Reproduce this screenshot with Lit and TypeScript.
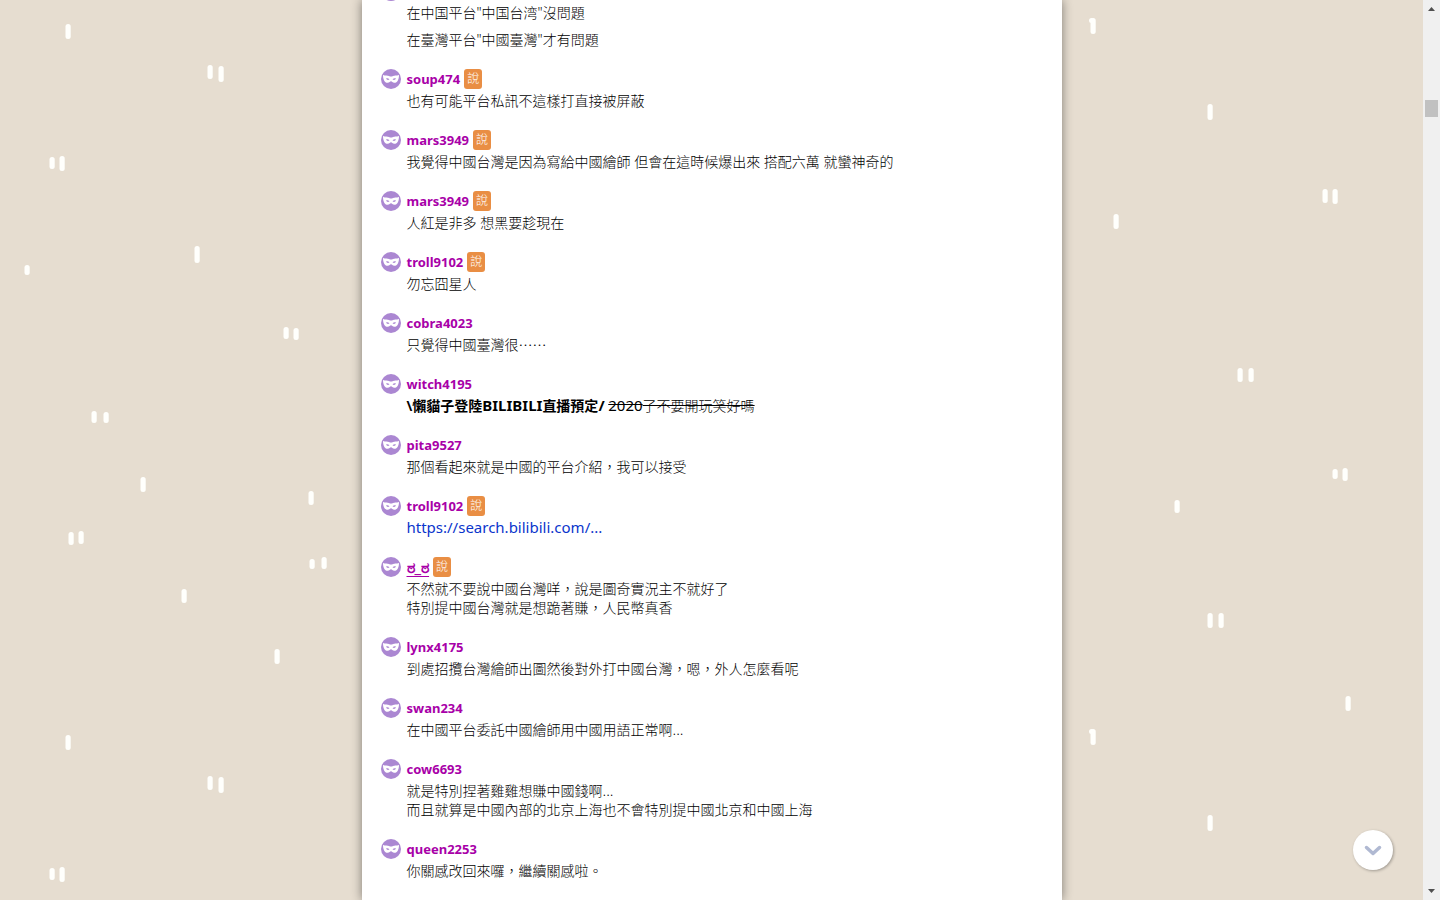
import { LitElement, html, css, svg, nothing, TemplateResult } from "lit";
import { customElement, property } from "lit/decorators.js";

interface Post {
  user?: string;
  registered?: boolean;
  says?: boolean;
  paragraphs: (string | TemplateResult)[];
}

const posts: Post[] = [
  {
    paragraphs: ['在中国平台"中国台湾"沒問題', '在臺灣平台"中國臺灣"才有問題'],
  },
  { user: "soup474", says: true, paragraphs: ["也有可能平台私訊不這樣打直接被屏蔽"] },
  {
    user: "mars3949",
    says: true,
    paragraphs: ["我覺得中國台灣是因為寫給中國繪師 但會在這時候爆出來 搭配六萬 就蠻神奇的"],
  },
  { user: "mars3949", says: true, paragraphs: ["人紅是非多 想黑要趁現在"] },
  { user: "troll9102", says: true, paragraphs: ["勿忘囧星人"] },
  { user: "cobra4023", paragraphs: [html`只覺得中國臺灣很<span class="wide">……</span>`] },
  {
    user: "witch4195",
    paragraphs: [
      html`<b>\\懶貓子登陸<span class="latin">BILIBILI</span>直播預定<span class="latin">/</span></b>
        <s><span class="latin">2020</span>了不要開玩笑好嗎</s>`,
    ],
  },
  { user: "pita9527", paragraphs: ["那個看起來就是中國的平台介紹，我可以接受"] },
  {
    user: "troll9102",
    says: true,
    paragraphs: [html`<a class="latin" href="#search">https://search.bilibili.com/...</a>`],
  },
  {
    user: "ಠ_ಠ",
    registered: true,
    says: true,
    paragraphs: [
      html`不然就不要說中國台灣咩，說是圖奇實況主不就好了<br />特別提中國台灣就是想跪著賺，人民幣真香`,
    ],
  },
  { user: "lynx4175", paragraphs: ["到處招攬台灣繪師出圖然後對外打中國台灣，嗯，外人怎麼看呢"] },
  {
    user: "swan234",
    paragraphs: [html`在中國平台委託中國繪師用中國用語正常啊<span class="latin">...</span>`],
  },
  {
    user: "cow6693",
    paragraphs: [
      html`就是特別捏著雞雞想賺中國錢啊<span class="latin">...</span><br />而且就算是中國內部的北京上海也不會特別提中國北京和中國上海`,
    ],
  },
  { user: "queen2253", paragraphs: ["你關感改回來囉，繼續關感啦。"] },
];

/* Strokes of the wallpaper tile: centre x, top, bottom */
const strokes: [number, number, number][] = [
  [68, 24, 39], [210, 65, 79], [221, 66, 82], [52, 157, 169], [62, 156, 171],
  [197, 246, 263], [27, 265, 275], [286, 327, 339], [296, 328, 340],
  [94, 411, 423], [106, 412, 423], [143, 477, 492], [311, 491, 505],
  [71, 532, 545], [81, 531, 544], [312, 559, 569], [324, 557, 569],
  [184, 589, 603], [277, 649, 664],
  [1093, 18, 34], [1210, 104, 120], [1325, 189, 203], [1335, 189, 204],
  [1116, 214, 229], [1240, 368, 382], [1251, 368, 382], [1335, 469, 479],
  [1345, 468, 481], [1177, 500, 513], [1210, 613, 628], [1221, 613, 628],
  [1348, 696, 711],
];

@customElement("mask-avatar")
export class MaskAvatar extends LitElement {
  static styles = css`
    :host { display: block; flex: none; width: 20px; height: 20px; }
    svg { display: block; }
  `;
  render() {
    return html`<svg width="20" height="20" viewBox="0 0 20 20" aria-hidden="true">
      <circle cx="10" cy="10" r="10" fill="#ab87d2" />
      <path
        fill="#fff"
        fill-rule="evenodd"
        d="M2 6C4.500 7 6.500 6.200 8 7Q10 8 12 7C13.500 6.200 15.500 7 18 6C18 10 16.500 13.800 13.400 13.800C11.500 13.800 11 12.300 10 12.300S8.500 13.800 6.600 13.800C3.500 13.800 2 10 2 6ZM4.900 9.500Q6.200 11.800 8.500 10.500Q7 8.500 4.900 9.500ZM15.100 9.500Q13.800 11.800 11.500 10.500Q13 8.500 15.100 9.500Z"
      />
    </svg>`;
  }
}

@customElement("reply-post")
export class ReplyPost extends LitElement {
  @property({ attribute: false }) post!: Post;

  static styles = css`
    :host { display: block; }
    .post { display: flex; gap: 6px; }
    .content { flex: 1; min-width: 0; }
    .head { display: flex; align-items: center; gap: 4px; height: 20px; }
    .name { font-size: 13px; line-height: 18px; font-weight: 700; color: #a800a8; text-decoration: none; }
    .registered { font-size: 16px; text-decoration: underline; text-underline-offset: 3px; }
    .badge {
      width: 18px; height: 20px; border-radius: 3px;
      background: #e98e44; color: #fff;
      font-size: 12px; line-height: 20px; font-weight: 300; text-align: center;
    }
    .body { display: flex; flex-direction: column; gap: 8px; margin-top: 2px; font-weight: 300; }
    p { margin: 0; line-height: 19px; }
    a { color: #0a35cc; text-decoration: none; }
    b { font-weight: 700; }
    .latin { font-size: 15px; line-height: 1; }
    s .latin, a.latin { font-weight: 400; }
    .wide { font-family: "Noto Sans CJK TC", sans-serif; line-height: 1; }
  `;

  render() {
    const { user, registered, says, paragraphs } = this.post;
    return html`<article class="post">
      <mask-avatar></mask-avatar>
      <div class="content">
        <div class="head">
          ${!user
            ? nothing
            : registered
              ? html`<a class="name registered" href="#user">${user}</a>`
              : html`<span class="name">${user}</span>`}
          ${says ? html`<span class="badge">說</span>` : nothing}
        </div>
        <div class="body">${paragraphs.map((p) => html`<p>${p}</p>`)}</div>
      </div>
    </article>`;
  }
}

@customElement("app-root")
export class AppRoot extends LitElement {
  static styles = css`
    :host {
      display: flex; position: relative; height: 100vh; overflow: hidden;
      background: #e6ddd0; color: #000;
      font: 14px/19px "Noto Sans", "Noto Sans CJK TC", sans-serif;
    }
    .wallpaper { position: absolute; inset: 0; width: 100%; height: 100%; }
    .viewport { position: relative; flex: 1; min-width: 0; overflow: hidden; }
    .sheet {
      display: flow-root;
      box-sizing: border-box; max-width: 700px; min-height: 100%;
      margin: 0 auto; padding: 0 19px;
      background: #fff; box-shadow: 0 0 10px rgba(0, 0, 0, 0.45);
    }
    .replies { display: flex; flex-direction: column; gap: 20px; margin-top: -19px; }
    .jump {
      position: absolute; right: 30px; bottom: 30px;
      width: 40px; height: 40px; padding: 0; border: 0; border-radius: 50%;
      background: #fff; box-shadow: 1px 1px 3px rgba(0, 0, 0, 0.3);
      display: grid; place-items: center;
    }
    .scrollbar {
      position: relative; flex: none; width: 17px; box-sizing: border-box;
      background: #f0f0f0;
      display: flex; flex-direction: column; align-items: center;
    }
    .arrow { width: 17px; height: 17px; flex: none; }
    .track { flex: 1; width: 13px; padding-top: 83px; }
    .thumb { height: 17px; background: #c1c1c1; }
  `;

  render() {
    return html`
      <svg class="wallpaper" aria-hidden="true">
        <defs>
          <pattern id="tile" width="1420" height="711" patternUnits="userSpaceOnUse">
            ${strokes.map(
              ([x, top, bottom]) => svg`<rect x=${x - 2.5} y=${top} width="5.200"
                height=${bottom - top} rx="2.500" fill="#fffffc" />`
            )}
            <circle cx="1091.500" cy="20.500" r="2.500" fill="#fffffc" />
          </pattern>
        </defs>
        <rect width="100%" height="100%" fill="url(#tile)" />
      </svg>
      <div class="viewport">
        <main class="sheet">
          <div class="replies">
            ${posts.map((p) => html`<reply-post .post=${p}></reply-post>`)}
          </div>
        </main>
        <button class="jump" aria-label="Scroll to bottom">
          <svg width="18" height="12" viewBox="0 0 18 12" aria-hidden="true">
            <path d="M2.500 3.500L9 9.500L15.500 3.500" fill="none" stroke="#b0b9d2"
              stroke-width="3.500" stroke-linecap="round" stroke-linejoin="round" />
          </svg>
        </button>
      </div>
      <div class="scrollbar" aria-hidden="true">
        <svg class="arrow" viewBox="0 0 17 17"><path d="M5 11L8.500 7L12 11Z" fill="#505050" /></svg>
        <div class="track"><div class="thumb"></div></div>
        <svg class="arrow" viewBox="0 0 17 17"><path d="M5 6L8.500 10L12 6Z" fill="#505050" /></svg>
      </div>
    `;
  }
}
